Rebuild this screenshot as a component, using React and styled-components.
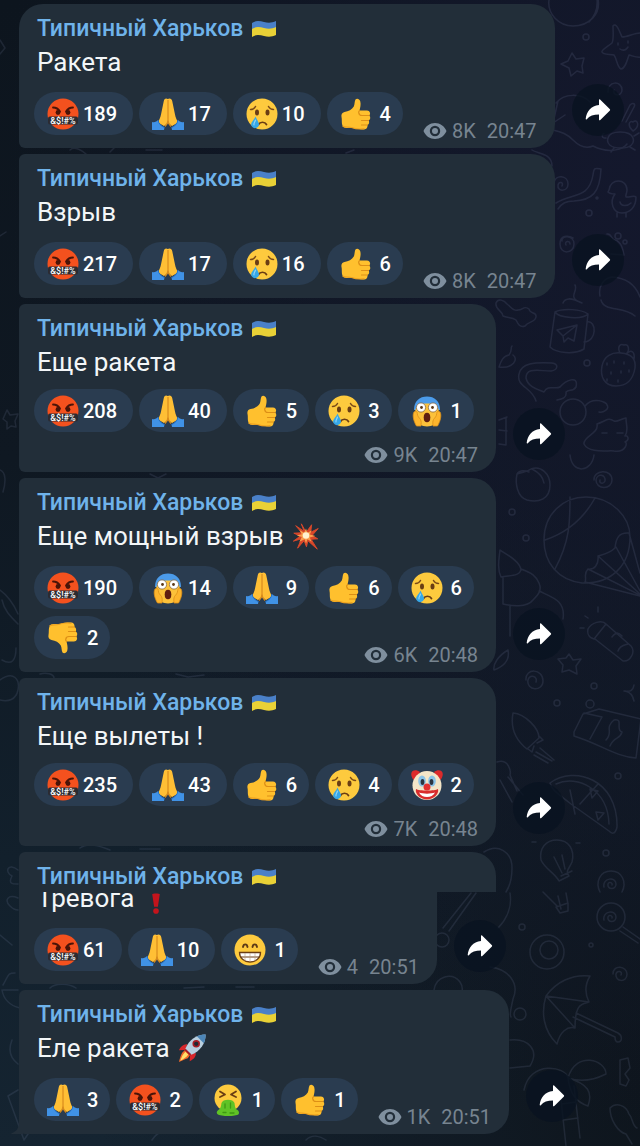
import React from 'react';
import styled, { createGlobalStyle } from 'styled-components';

const messages = [
    {
        id: 1,
        text: 'Ракета',
        views: '8K',
        time: '20:47',
        first: true,
        reactions: [['rage', 189], ['pray', 17], ['cry', 10], ['like', 4]],
    },
    {
        id: 2,
        text: 'Взрыв',
        views: '8K',
        time: '20:47',
        reactions: [['rage', 217], ['pray', 17], ['cry', 16], ['like', 6]],
    },
    {
        id: 3,
        text: 'Еще ракета',
        views: '9K',
        time: '20:47',
        narrow: true,
        tight: true,
        reactions: [['rage', 208], ['pray', 40], ['like', 5], ['cry', 3], ['scream', 1]],
    },
    {
        id: 4,
        text: 'Еще мощный взрыв',
        emoji: 'boom',
        views: '6K',
        time: '20:48',
        narrow: true,
        reactions: [['rage', 190], ['scream', 14], ['pray', 9], ['like', 6], ['cry', 6], ['dislike', 2]],
    },
    {
        id: 5,
        text: 'Еще вылеты !',
        views: '7K',
        time: '20:48',
        narrow: true,
        tight: true,
        reactions: [['rage', 235], ['pray', 43], ['like', 6], ['cry', 4], ['clown', 2]],
    },
    {
        id: 6,
        text: 'Тревога',
        emoji: 'mark',
        views: '4',
        time: '20:51',
        cut: true,
        reactions: [['rage', 61], ['pray', 10], ['grin', 1]],
    },
    {
        id: 7,
        text: 'Еле ракета',
        emoji: 'rocket',
        views: '1K',
        time: '20:51',
        last: true,
        reactions: [['pray', 3], ['rage', 2], ['vomit', 1], ['like', 1]],
    },
];

export default function App() {
    return (
        <>
            <GlobalStyle />
            <Chat>
                <Wallpaper />
                {messages.map((message) => (
                    message.cut
                        ? <CutMessage key={message.id} message={message} />
                        : <Message key={message.id} message={message} />
                ))}
            </Chat>
        </>
    )
}

function Message({ message }) {
    return (
        <Row>
            <Bubble $first={message.first} $narrow={message.narrow}>
                <SenderName />
                <Text>
                    {message.text}
                    {message.emoji && <Emoji name={message.emoji} />}
                </Text>
                <Footer message={message} />
                {message.last && <Tail viewBox="0 0 12 12"><path d="M12 0v12H1c-1 0-1-1 0-1 5-2 7-5 7-11z" /></Tail>}
            </Bubble>
            <Share />
        </Row>
    )
}

function CutMessage({ message }) {
    return (
        <article>
            <Slab>
                <SenderName />
            </Slab>
            <Row as="div">
                <CutBubble>
                    <CutText>
                        {message.text}
                        <Emoji name={message.emoji} />
                    </CutText>
                    <Footer message={message} />
                </CutBubble>
                <Share />
            </Row>
        </article>
    )
}

function SenderName() {
    return (
        <Sender href="#channel">
            Типичный Харьков
            <Flag viewBox="0 0 26 18" aria-hidden="true">
                <path d="M1 3c4-3 8-2 12-1s8 1 12-1v8c-4 2-8 2-12 1S5 7 1 10z" fill="#4a80c8" />
                <path d="M1 9c4-3 8-2 12-1s8 1 12-1v8c-4 2-8 2-12 1s-8-2-12 1z" fill="#e9d136" />
            </Flag>
        </Sender>
    )
}

function Footer({ message }) {
    return (
        <Reactions $tight={message.tight}>
            {message.reactions.map(([name, count]) => (
                <Chip key={name} $short={count < 10} aria-label={name + ' ' + count}>
                    <Emoji name={name} />
                    {count}
                </Chip>
            ))}
            <Meta>
                <Eye viewBox="0 0 24 18" aria-hidden="true">
                    <path
                        fillRule="evenodd"
                        d="M12 1C7 1 2.500 4 .5 9c2 5 6.500 8 11.500 8s9.500-3 11.500-8C21.500 4 17 1 12 1zm0 2.800a5.200 5.200 0 1 1 0 10.400 5.200 5.200 0 0 1 0-10.400zM12 6a3 3 0 1 0 0 6 3 3 0 0 0 0-6z"
                    />
                </Eye>
                <span>{message.views}</span>
                <time>{message.time}</time>
            </Meta>
        </Reactions>
    )
}

function Share() {
    return (
        <ShareButton aria-label="Поделиться">
            <svg width="26" height="22" viewBox="0 0 26 22" aria-hidden="true">
                <path d="M14 1.200c0-.9.700-1.100 1.300-.5l9.400 9.200c.6.600.6 1.200 0 1.800l-9.400 9.200c-.6.600-1.300.4-1.300-.5v-4.900C8.500 15.500 4.500 16.800 1.800 20.200c-.5.600-1.200.4-1.100-.4C1.500 12.500 6 6.800 14 6z" fill="#fff" />
            </svg>
        </ShareButton>
    )
}

function Emoji({ name }) {
    return (
        <Glyph viewBox="0 0 32 32" aria-hidden="true">
            {drawings[name]}
        </Glyph>
    )
}

const thumb = (
    <>
        <path d="M1.500 19c-.5-2.500.5-4.500 3-5 4-.6 7.500-2.500 9.300-5.500 1-2 .7-5.500 1.700-7C16.700 0 19.500.6 20.300 3.500c.8 3-.2 6.500-.8 9h7.500c3 0 4 3.500 2.300 5 1.500 1.600 1.300 4-.6 5 1 1.700.4 3.900-1.200 4.600.3 2.600-1 4.400-3.500 4.400-5 0-8-.2-11-1.400-3-.8-7 .7-9.500-1.200C1 26.500 2.300 22 1.500 19z" fill="#ffc02e" />
        <path d="M29 17.500h-7c-2 0-3-1-3-2.500M28.500 22.500h-7M27.500 27h-6M19.500 12.500c-1 1-1.300 2-.5 3.500" fill="none" stroke="#dd8f16" strokeWidth="1.200" strokeLinecap="round" />
        <path d="M2.500 28c3 2 6 .5 9 1.500 4 1.500 9 1.700 13 1.200" fill="none" stroke="#eda11f" strokeWidth="1.200" />
    </>
)

const drawings = {
    rage: (
        <>
            <circle cx="16" cy="16" r="15.500" fill="#f4511e" />
            <path d="M6 9.500c2.500 0 5.500 1.500 7 4M26 9.500c-2.500 0-5.500 1.500-7 4" fill="none" stroke="#4a1408" strokeWidth="1.800" strokeLinecap="round" />
            <circle cx="11" cy="14.500" r="2.400" fill="#4a1408" />
            <circle cx="21" cy="14.500" r="2.400" fill="#4a1408" />
            <rect x="1" y="18.500" width="30" height="8" rx="2" fill="#2b2b31" />
            <text x="16" y="26" textAnchor="middle" fontFamily="Roboto, sans-serif" fontSize="9" fontWeight="500" fill="#fff">&amp;$!#%</text>
        </>
    ),
    pray: (
        <>
            <path d="M15.800 1c-2-1.300-3.600-.3-4 2L9 16.500c-.4 3-1.800 5-3 8l6 3.500 4-3 4 3 6-3.500c-1.200-3-2.600-5-3-8L20.200 3c-.4-2.300-2.400-3.300-4.400-2z" fill="#ffbf35" />
            <path d="M16 2v20c0 3-1 4.500-3 6.500M16 22c0 3 1 4.500 3 6.500" fill="none" stroke="#d98b1d" strokeWidth="1.200" />
            <path d="M0 24c2.500.6 4.500-.2 6-2 .6 3 3.500 6.500 6.500 7.500L12 32H0zM32 24c-2.500.6-4.500-.2-6-2-.6 3-3.500 6.500-6.500 7.500l.5 2.500h12z" fill="#4092e6" />
            <path d="M6 22c.5 3.500 3 6.300 6.500 7.500M26 22c-.5 3.500-3 6.300-6.500 7.500" fill="none" stroke="#2770c0" strokeWidth="1" />
        </>
    ),
    cry: (
        <>
            <circle cx="16" cy="16" r="15.500" fill="#fdca3e" />
            <path d="M4.500 11.500c2 0 4-1.200 5-3M27.500 11.500c-2 0-4-1.200-5-3" fill="none" stroke="#7a4a18" strokeWidth="1.500" strokeLinecap="round" />
            <ellipse cx="11" cy="14.500" rx="2" ry="2.900" fill="#6a3d14" />
            <ellipse cx="21.500" cy="14.500" rx="2" ry="2.900" fill="#6a3d14" />
            <path d="M12.500 26.500c1.500-3 6.500-3 8 0" fill="none" stroke="#6a3d14" strokeWidth="1.700" strokeLinecap="round" />
            <path d="M9.500 18.500c1.500 3.500 3.500 5.500 3.500 8a4 4 0 0 1-7.500 1.500c-1.500-3.500 2.500-5.500 4-9.500z" fill="#35a7e8" />
            <path d="M9.500 22c-.5 2-2 3.500-1.500 5" fill="none" stroke="#8fd4f7" strokeWidth="1.200" strokeLinecap="round" />
        </>
    ),
    like: thumb,
    dislike: <g transform="matrix(1 0 0 -1 0 32)">{thumb}</g>,
    scream: (
        <>
            <path d="M3 15C3 6 8.500 1.500 16 1.500S29 6 29 15z" fill="#4b9bea" />
            <path d="M4.500 14c3-4 6.500-5.500 11.500-5.500S24.500 10 27.500 14c.8 6-.5 17.500-11.500 17.500S3.700 20 4.500 14z" fill="#fcc13a" />
            <path d="M3 17c1.700-1.500 3.200-.5 3.300 1.500.2 3 1.700 4 3.200 6 1 2 .7 4 .5 6.500H5.500C3 27 1 20.500 3 17zM29 17c-1.700-1.500-3.200-.5-3.300 1.500-.2 3-1.700 4-3.200 6-1 2-.7 4-.5 6.500h4.500C29 27 31 20.500 29 17z" fill="#fdb52d" stroke="#dd8f16" strokeWidth=".8" />
            <circle cx="10" cy="12.500" r="4.600" fill="#fff" stroke="#8a6b45" strokeWidth=".8" />
            <circle cx="22" cy="12.500" r="4.600" fill="#fff" stroke="#8a6b45" strokeWidth=".8" />
            <circle cx="10.500" cy="12.500" r="1.400" fill="#5b3716" />
            <circle cx="21.500" cy="12.500" r="1.400" fill="#5b3716" />
            <ellipse cx="16" cy="22.500" rx="3.300" ry="4.800" fill="#601e10" />
        </>
    ),
    clown: (
        <>
            <path d="M9 3C4-.5-1 2 .5 7c.8 3.500 3 5 5 4.500zM23 3c5-3.500 10-1 8.500 4-.8 3.500-3 5-5 4.500z" fill="#dc2b2b" />
            <circle cx="16" cy="16.500" r="14.500" fill="#f4e6c8" />
            <ellipse cx="11" cy="12" rx="3.800" ry="5.600" fill="#8cc5e8" />
            <ellipse cx="21" cy="12" rx="3.800" ry="5.600" fill="#8cc5e8" />
            <ellipse cx="11.500" cy="13" rx="1.900" ry="3" fill="#2c3640" />
            <ellipse cx="20.500" cy="13" rx="1.900" ry="3" fill="#2c3640" />
            <path d="M5 20c3 2 19 2 22 0 1.500 5-5 10.500-11 10.500S3.500 25 5 20z" fill="#d92d2d" />
            <path d="M8 23.500c4 1.500 12 1.500 16 0-1.500 3-4.500 4.500-8 4.500s-6.500-1.500-8-4.500z" fill="#fff" />
            <circle cx="16" cy="18" r="3.500" fill="#e33030" />
        </>
    ),
    grin: (
        <>
            <circle cx="16" cy="16" r="15.500" fill="#fdca3e" />
            <path d="M9 13c.5-3.500 4-3.500 4.500 0M18.500 13c.5-3.500 4-3.500 4.500 0" fill="none" stroke="#5d3a16" strokeWidth="1.900" strokeLinecap="round" />
            <path d="M5.500 18.500h21c0 5.500-4.500 9.500-10.500 9.500S5.500 24 5.500 18.500z" fill="#fff" stroke="#6a3d14" strokeWidth="1.300" />
            <path d="M6.500 23h19" stroke="#6a3d14" strokeWidth="1" />
            <path d="M11 19v8M16 19v9M21 19v8" stroke="#b99b78" strokeWidth=".6" />
        </>
    ),
    vomit: (
        <>
            <circle cx="16" cy="14" r="13.500" fill="#fdca3e" />
            <path d="M8 7.500l5 3-5 2.500M24 7.500l-5 3 5 2.500" fill="none" stroke="#6a3d14" strokeWidth="1.800" strokeLinecap="round" strokeLinejoin="round" />
            <path d="M9.500 19c1-4.500 12-4.500 13 0 .5 3.500.5 5 2 6.500 3 1 3.500 5 .5 5.500-4 1.500-13 1.500-18 0-3-.7-3-4 0-5.500 2-1.500 2-3.500 2.500-6.500z" fill="#5fc326" />
            <path d="M13 20v4M18.500 19v5M11 28.500h3M18 29h4" stroke="#3d9713" strokeWidth="1.300" strokeLinecap="round" />
        </>
    ),
    boom: (
        <>
            <path d="M16 12L11 3l3 8L5 5l6.500 7.500L3 13l7 3-7.500 5.500L11 19l-4 10 7-8 2.500 6.500L18 21l10 9-6.500-10.500 7-.5-6-3.500L29 8l-8 4 1-8-5 7z" fill="#d9482a" stroke="#d9482a" strokeLinejoin="round" />
            <path d="M16 8l1.500 4.500L22 10l-2 4.500 6 1.500-6 1.500 2 4.500-4.500-2.500L16 24l-1.500-4.500L9 22l2.500-5L6 15.500l5.500-1.500L9 9.500l5 3z" fill="#f9a04c" />
            <circle cx="16" cy="15.500" r="3.500" fill="#fff3cf" />
        </>
    ),
    mark: (
        <>
            <path d="M12 7c0-1.500 8-1.500 8 0l-2 13h-4z" fill="#c4141c" />
            <circle cx="16" cy="24.500" r="3" fill="#c4141c" />
        </>
    ),
    rocket: (
        <>
            <path d="M11 12c-4-.5-7 2-9 6.500l7-.5zM20 21c.5 4-2 7-6.500 9l.5-7z" fill="#d8262b" />
            <path d="M30.500 1.500C21 1.500 13 6.500 8.500 17.500l6 6C25.500 19 30.500 11 30.500 1.500z" fill="#b9cfdf" />
            <path d="M30.500 1.500c-3.500 0-6.500.6-9.300 1.900l7.400 7.400c1.300-2.800 1.900-5.800 1.900-9.300z" fill="#4c86b8" />
            <circle cx="20.500" cy="11.500" r="4" fill="#a51e26" />
            <circle cx="20.500" cy="11.500" r="2.300" fill="#1f2933" />
            <path d="M8.500 18L14 23.500l-2.500 3.500c-3 1-6 2.500-9.500 4 1-4 2-7 3.500-10z" fill="#f0692a" />
            <path d="M9 20l3 3c-2 3-5 5-8.500 6.500C5 26 6 22.500 9 20z" fill="#ffe06a" />
            <path d="M8.500 17.500l6 6" stroke="#a51e26" strokeWidth="2" />
        </>
    ),
}

// line-art doodles behind the messages
function Wallpaper() {
    return (
        <Doodles viewBox="0 0 640 1146" aria-hidden="true">
            <g id="sea">
                <path d="M549 0c-2 14 10 26 24 26 16 0 28-12 25-27M589 22c6-6 9-14 8-23" />
                <path d="M613 26c3-4 6 4 9 11 6 0 12-4 18-4M613 26c0 7 1 13-1 17-5 4-11 7-10 9 1 3 8 2 12 3 3 4 3 12 7 14 4 0 6-8 8-14 4 1 8 3 12 2M618 43v2M628 41v2M620 49c3 2 6 1 8-2" />
                <path d="M572 53l4 6 8-1-2 8 1 7-6-2-6 5-2-8-8-4 7-3z" />
                <circle cx="586" cy="37" r="3" />
                <path d="M608 92c-1-11 14-12 14-2 0 7-10 6-8 0M556 103c8-10 25-10 34-1M553 130c9 2 14 4 20 10 7 7 13 9 20 6 18 9 31 2 34-2M558 101l-5 22 12-8M622 121l8-16c3-3 6-1 4 2l-8 15" />
                <path d="M608 138c2-8 22-8 25 0 2 6-3 10-12 10-10 0-15-4-13-10zM606 138c-6 1-3-6-2-4M634 136l5-3M614 148l-3 4M630 147l5 3M633 131c-6-5-4-11 0-9 4-4 8 4 0 9z" />
            </g>
            <g id="duck">
                <path d="M532 150c6 4 20 3 20 16M556 203c16-10 33-4 37-28 1-8 2-7 8-6-1 24-9 31-27 32-8 0-12 2-16 8M554 183c1-9 14-8 14 1 0 8-11 8-10 1 1-4 6-3 4 1" />
                <path d="M609 190c1-12 18-12 18 0 0 4-2 5-1 7 6 0 8-2 10 0 0 10-6 16-14 16-9 0-13-11-7-19-3 0-6-1-7-2zM620 202c1 5 8 4 11 1M617 213v4M626 213v4" />
                <circle cx="589" cy="213" r="3" />
                <circle cx="597" cy="198" r="1" />
                <path d="M562 241c-1-6 12-6 12 3 0 10-14 11-14 0 0-9 8-9 13-6M570 244c0-4-6-3-4 1M607 234c5-1 4 6 8 6 7 2 8 10 9 15l-13-1M600 296c-2-10 4-18 12-19 16 1 24 9 28 20M576 300c-6-4 2-10-1-15" />
                <circle cx="618" cy="236" r="3" />
                <circle cx="625" cy="242" r="2" />
            </g>
            <g id="cup">
                <path d="M496 303c2-5 8-3 11 1 4 3 7 8 11 6 5 0 6-5 11-1 1 6 8 2 7 8-1 6-8 4-11 9-5 2-7-2-9-6-4-3-9-2-13-4-1-6-8-6-7-13z" />
                <path d="M555 312c8-4 26-3 33 2l-4 35c-10 6-28 4-34-2zM555 312c4 6 27 8 33 2M587 322c10-2 10 20-3 20M557 330l20-5-3 16-6-3-4 4-1-6zM563 336l14-11M563 303c2-6 9-4 12-3l7 3" />
                <path d="M601 300c3 12 22 6 34 16M602 366c2-10 10-14 19-13 11 1 15 6 14 15-2 12-8 18-19 18-12 0-16-10-14-20zM620 353c-3-6 0-10 4-8 5-2 6 6 2 9 6-6 9-1 8 5M607 363v2M614 361v2M624 362v2M611 372v2M621 371v2M629 370v2M607 379v2M618 380v2" />
                <path d="M499 367c2-6 4-11 10-12 4-6 1-7 3-9M499 367c14 2 20-8 14-12M536 401c-4-14-20-14-17-27 2-11 16-12 33-11 7 1 6 7-1 8-12 0-25-4-25 7 2 10 14 12 18 14 4-8 11-2 16-5 5-6 19-13 16 0-3 5-7 2-10 5 1 6-4 7-9 8" />
                <circle cx="587" cy="363" r="3" />
                <circle cx="573" cy="412" r="13" />
                <path d="M585 406c8-10 22-4 22-1 3 4-4 8-8 7M597 424c2 10-14 12-13 20 5 10 25 6 30 7 12 2 14-9 11-9 5-2 3-7 0-6 4-6 1-10 1-18-6 1-8 4-12 3-6-4-8 0-17 3zM570 455c2 20 22 17 24 0M602 433h5M617 433h6M499 420l8-3M499 430l8 1M499 444l7 1v-27" />
                <path d="M517 474c-2 9 0 23 10 26 12 3 23-1 23-15 0-11-9-20-19-16-4 3-8 3-14 5zM517 474c2-4 8-4 12-2M532 469c6 3 11 8 12 14M594 480c-1-10 18-12 18 0 0 10-16 10-16 0 1-7 10-6 9 1-2 4-6 2-5-1" />
            </g>
            <g id="parachute">
                <path d="M544 540c0-26 19-43 42-43 26 0 44 20 44 40 0 28-18 47-48 46-24-3-38-20-38-43zM570 497c0 25 0 44-15 72M595 498c-10 18-26 34-50 42M585 582c2-4-2-8 3-13 6 1 11-4 10-13 7-2 12-3 17-8 1-10 4-16 14-15M585 582l55 14M588 569l52 26M598 556l42 38M616 547l24 44M629 533l11 40" />
                <path d="M500 550c5 4 18 9 21 19-1 8-12 6-20 8-4-8-2-18-1-27zM503 577v27c8 2 24 4 30-4 6-6 9-10 6-17-3-7-7-10-18-14M539 591c12 6 27 9 24 28M510 605v31M588 629c3-6 14-10 18-5l-12 15c-6-2-7-5-6-10zM606 624l25 22c5 6-1 16-8 15l-28-22M612 637c5-6 7-4 10-1M618 651c2-6 7-6 10-7M585 616l3 2M598 607v5M580 628h4" />
                <path d="M569 654l4 6 8-1-5 7 1 8-8-4-7 2 1-7-5-6 8-1zM494 670c11-4 16-10 14-20-10 6-15 14-14 20zM526 680c-1-12 17-12 17 1 0 11-17 10-15-1 2-6 10-4 8 2M624 691c6 1 9 0 10-6M625 691c6 1 8 5 9 10" />
                <circle cx="512" cy="512" r="3" />
                <circle cx="526" cy="538" r="3" />
                <circle cx="594" cy="686" r="3" />
                <circle cx="557" cy="703" r="3" />
            </g>
            <g id="rocket">
                <path d="M513 713c12 1 26 15 26 25l-12 11c-10-8-17-20-14-36zM528 749l4 3 2-6M539 736l4 4-6 3M540 748l14 12M536 752l16 9M534 755l14 8" />
                <path d="M574 732l9-18 16-5 42 10-5 39c-20-1-36-14-62-22zM584 713l18 4-12 22M606 740c8-8-2-12 8-20 10-2 1 10 8 12-2 8-8 4-12 14" />
                <circle cx="590" cy="704" r="4" />
                <circle cx="618" cy="776" r="3" />
                <path d="M550 783c24-18 68-4 67 44-2 9-6 6-8 4l-38-27c-12-10-19-13-21-21zM556 784c22-10 52 6 53 40M570 790l5 24M580 804l18-20M590 789l8 2-6 7zM596 812l8 1-6 7zM497 762c12-4 14 10 13 13l7 16M500 780l12 22M508 777l15 18" />
            </g>
            <g id="bulb">
                <path d="M541 860c-2-12 5-20 16-20 12 0 18 10 15 22-3 7-7 9-3 14l-10 5c-4-8-14-12-18-21zM554 857l8 16M562 855l3 14M561 876l11-5M536 842h-4M576 843h4M543 892l14 14M558 896l3 13M566 893l2 11M556 907l12-4v8l-8 2z" />
                <path d="M484 852c14-9 28 0 28 16 0 10-2 18-6 24M510 893c2 12-2 25-12 35M471 893l-28 35M476 893l-27 38" />
                <path d="M600 892c-5-10 0-21 11-21s16 11 11 21" />
                <circle cx="611" cy="917" r="14" />
                <path d="M604 887c-2-9 12-11 12-3 0 6-9 6-8 0 1-3 5-1 4 1M604 920c-2-9 12-11 12-3 0 6-9 6-8 0 1-3 5-1 4 1M623 927l17 12M620 931l18 12" />
                <circle cx="547" cy="952" r="17" />
                <circle cx="549" cy="950" r="9" />
                <circle cx="442" cy="940" r="7" />
                <circle cx="606" cy="853" r="3" />
                <circle cx="522" cy="927" r="3" />
                <circle cx="591" cy="945" r="2" />
                <circle cx="520" cy="1014" r="6" />
                <path d="M490 967c18 2 30 16 23 32-2 10-4 16-2 18M434 990c2-14 18-18 26-8 4 6 2 10 0 14M613 974c0-10 14-8 14 0 0 9-12 8-11 0 1-4 7-3 5 1" />
            </g>
            <g id="umbrella">
                <path d="M546 996c10-14 26-22 44-20-6 10-5 18-1 26-6 2-14 0-14 26-8-2-15 4-18 16-14-14-16-32-11-48zM546 996l43 6M546 996l29 32M576 1013l42 20c5 3 4 9 0 9-3 0-3-3-3-5l-42-20" />
                <path d="M510 1040c18-2 30 10 20 26l-20 2M524 1090c6-30 42-24 44-12 8-28 38-18 38-4-12 6-26 8-38 4 20 6 25 14 20 28-12-4-18-12-20-28M560 1090l6 56M574 1086l6 52M562 1104l14-2M564 1120l14-2M620 1060l8-2 2 10-5 6 4 6-3 6-6-2zM610 1108c6-6 16-3 19 6 4 4 3 12 8 14M610 1108c0 12 8 24 16 26l6 10" />
            </g>
            <g id="edge">
                <path d="M0 40l5 8-5 6M0 236l6-4M7 410l3 5 8-1-3 7 1 6-5-1-4 3v-7l-4-3zM0 470c6 2 6 12 3 22M0 590c6 4 14 14 18 24M2 600c2 10 8 16 16 24M2 660c10 6 14 0 14-12M0 680c14-10 20 0 18 10s-10 12-18 10M18 870c-10-8-14 2-6 6-4 8 0 8 6 8M18 898c-10-4-14 2-8 8 4 4 8 4 8 4M0 935l12 10M3 985c6-10 4-12 12-12M2 990c2 12 10 16 18 18M3 990h15M12 1040c-4 10-2 18 6 24M8 1096l16 44 20-30M8 1096l10-6M152 1140c6-10 20-12 28-8M306 1140c6-6 14-4 20 0" />
                <path d="M70 150c4-4 12 0 16 4M110 152l6-6M146 150h16M346 153l8-3M150 474l8 4 8-4M40 674c6-2 14 0 14 4M176 674l12 3 16-2M80 848c8-6 20-2 30 2M140 849h20M50 988c6-6 20-4 26 0M184 988l20-1M236 987h18" />
            </g>
        </Doodles>
    )
}

const GlobalStyle = createGlobalStyle`
    * {
        box-sizing: border-box;
    }

    body {
        margin: 0;
        background-color: #101a26;
        font-family: Roboto, "Noto Sans", sans-serif;
    }
`
const Chat = styled.main`
    position: relative;
    display: flex;
    flex-direction: column;
    gap: 6px;
    min-height: 100vh;
    padding: 4px 12px 12px 19px;
    overflow: hidden;
    background:
        radial-gradient(ellipse at 100% 15%, #14182d 0%, rgba(20, 24, 45, 0) 70%),
        radial-gradient(ellipse at 100% 95%, #0e151d 0%, rgba(14, 21, 29, 0) 60%),
        linear-gradient(to bottom, #0d151e 0%, #0f1822 40%, #12202c 75%, #152431 100%);
`
const Doodles = styled.svg`
    position: absolute;
    top: 0;
    right: 0;
    width: 640px;
    height: 1146px;
    fill: none;
    stroke: #9aa6d0;
    stroke-width: 1.5;
    stroke-linecap: round;
    stroke-linejoin: round;
    opacity: 0.12;
`
const Row = styled.article`
    position: relative;
    display: flex;
    align-items: flex-end;
`
const Bubble = styled.div`
    position: relative;
    width: fit-content;
    max-width: ${({ $narrow }) => ($narrow ? '477px' : '540px')};
    padding: 12px 18px 6px 15px;
    background-color: #222e39;
    border-radius: ${({ $first }) => ($first ? '24px' : '6px')} 24px 24px 6px;
`
const Slab = styled.div`
    position: relative;
    width: 100%;
    max-width: 477px;
    height: 40px;
    padding: 12px 18px 0 15px;
    background-color: #222e39;
    border-radius: 6px 24px 0 0;
`
const CutBubble = styled(Bubble)`
    padding-top: 0;
    border-radius: 0 0 24px 6px;
`
const Tail = styled.svg`
    position: absolute;
    left: -8px;
    bottom: 0;
    width: 12px;
    height: 12px;
    fill: #222e39;
`
const Sender = styled.a`
    display: flex;
    align-items: center;
    gap: 8px;
    margin-left: 3px;
    color: #6fb3ea;
    font-size: 23px;
    font-weight: 500;
    line-height: 26px;
    text-decoration: none;
`
const Flag = styled.svg`
    width: 26px;
    height: 18px;
`
const Glyph = styled.svg`
    flex: none;
    width: 32px;
    height: 32px;
`
const Text = styled.p`
    display: flex;
    align-items: center;
    gap: 7px;
    margin: 0 0 0 3px;
    color: #f3f6f8;
    font-size: 26px;
    line-height: 40px;

    ${Glyph} {
        width: 30px;
        height: 30px;
    }
`
const CutText = styled(Text)`
    align-items: flex-end;
    height: 26px;
    overflow: hidden;
`
const Reactions = styled.div`
    display: flex;
    flex-wrap: wrap;
    align-items: flex-end;
    column-gap: 6px;
    margin-top: ${({ $tight }) => ($tight ? '7px' : '10px')};
`
const Chip = styled.button`
    display: flex;
    align-items: center;
    gap: ${({ $short }) => ($short ? '8px' : '4px')};
    height: 43px;
    margin: 0 0 7px;
    padding: 0 ${({ $short }) => ($short ? '12px' : '16px')} 0 13px;
    border: 0;
    border-radius: 22px;
    background-color: #2a3c50;
    color: #fff;
    font-family: inherit;
    font-size: 20px;
    font-weight: 500;
`
const Meta = styled.div`
    display: flex;
    align-items: center;
    margin: 5px 0 0 auto;
    padding-left: 14px;
    color: #778490;
    font-size: 20px;
    line-height: 22px;

    time {
        margin-left: 11px;
    }
`
const Eye = styled.svg`
    width: 24px;
    height: 18px;
    margin-right: 5px;
    fill: #7f8f9e;
`
const ShareButton = styled.button`
    display: flex;
    align-items: center;
    justify-content: center;
    flex: none;
    width: 52px;
    height: 52px;
    margin: 0 0 12px 17px;
    padding: 0;
    border: 0;
    border-radius: 50%;
    background-color: rgba(9, 19, 32, 0.8);
`
